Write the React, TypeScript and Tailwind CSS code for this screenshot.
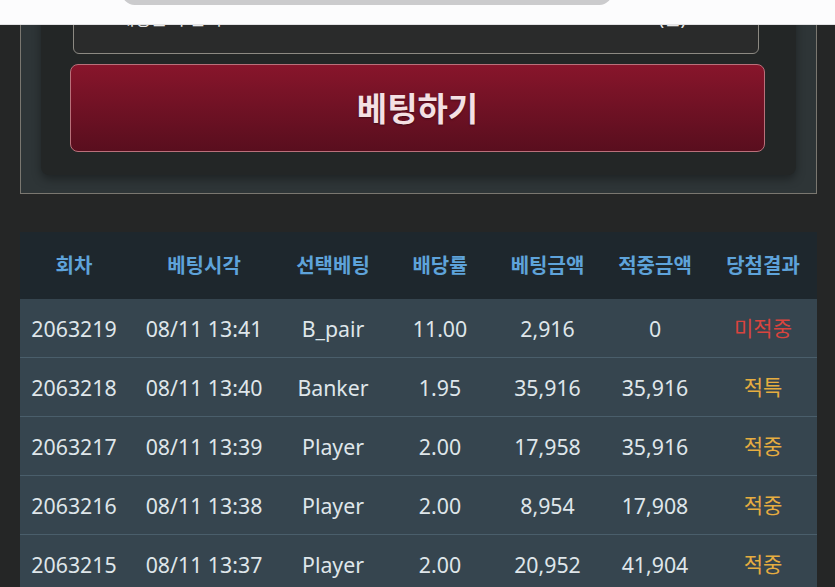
const rows = [
  { round: '2063219', time: '08/11 13:41', pick: 'B_pair', odds: '11.00', bet: '2,916', win: '0', result: '미적중' },
  { round: '2063218', time: '08/11 13:40', pick: 'Banker', odds: '1.95', bet: '35,916', win: '35,916', result: '적특' },
  { round: '2063217', time: '08/11 13:39', pick: 'Player', odds: '2.00', bet: '17,958', win: '35,916', result: '적중' },
  { round: '2063216', time: '08/11 13:38', pick: 'Player', odds: '2.00', bet: '8,954', win: '17,908', result: '적중' },
  { round: '2063215', time: '08/11 13:37', pick: 'Player', odds: '2.00', bet: '20,952', win: '41,904', result: '적중' },
];

const headers = ['회차', '베팅시각', '선택베팅', '배당률', '베팅금액', '적중금액', '당첨결과'];

const cols = 'grid grid-cols-[108px_152px_106px_108px_107px_108px_108px]';

export default function App() {
  return (
    <div
      className="relative h-[587px] w-[835px] overflow-hidden bg-[#252626]"
      style={{ fontFamily: '"Noto Sans", "Noto Sans CJK KR", sans-serif' }}
    >
      <div className="pl-[20px] pr-[18px]">
        {/* bet form */}
        <div className="mt-[-40px] border border-[#7a7770] bg-[#2e3537] px-[20px] pt-[20px] pb-[18px]">
          <div className="rounded-lg bg-[#232626] pt-[9px] pb-[23px] pl-[29px] pr-[31px] shadow-[0_4px_10px_rgba(0,0,0,0.35)]">
            <div className="ml-[3px] mr-[6px] flex h-[64px] items-start justify-between rounded-[6px] border border-[#8c8982] bg-[#2a2b2b] pl-[44px] pr-[72px] pt-[14px] text-[18px] text-[#e8e8e8]">
              <span>배팅금액 입력</span>
              <span>(원)</span>
            </div>
            <button className="mt-[10px] flex h-[88px] w-full items-center justify-center rounded-lg border border-[#b9707a] bg-gradient-to-b from-[#88152b] to-[#590e1e] pt-[2px] text-[33px] font-bold text-[#f4e0e3] [text-shadow:0_1px_2px_rgba(0,0,0,0.4)]">
              베팅하기
            </button>
          </div>
        </div>

        {/* history table */}
        <div className="mt-[38px]">
          <div className={`${cols} h-[67px] items-center bg-[#1e272d] text-[20px] font-bold text-[#5ea3da]`}>
            {headers.map(h => (
              <div key={h} className="text-center">{h}</div>
            ))}
          </div>
          {rows.map(r => (
            <div
              key={r.round}
              className={`${cols} h-[59px] items-center border-b border-[#4a5e6b] bg-[#36454f] pt-[1px] text-[21.3px] text-[#dfe6ea]`}
            >
              <div className="text-center">{r.round}</div>
              <div className="text-center">{r.time}</div>
              <div className="text-center">{r.pick}</div>
              <div className="text-center">{r.odds}</div>
              <div className="text-center">{r.bet}</div>
              <div className="text-center">{r.win}</div>
              <div className={`text-center text-[21px] ${r.result === '미적중' ? 'text-[#d8443e]' : 'text-[#e6ad40]'}`}>
                {r.result}
              </div>
            </div>
          ))}
        </div>
      </div>

      {/* browser address bar overlay */}
      <div className="absolute inset-x-0 top-0 h-[25px] border-b border-[#e2e2e4] bg-[#fcfcfd]">
        <div className="absolute top-[-20px] left-[122px] h-[25px] w-[490px] rounded-full bg-[#cbcbcd]" />
      </div>
    </div>
  );
}
